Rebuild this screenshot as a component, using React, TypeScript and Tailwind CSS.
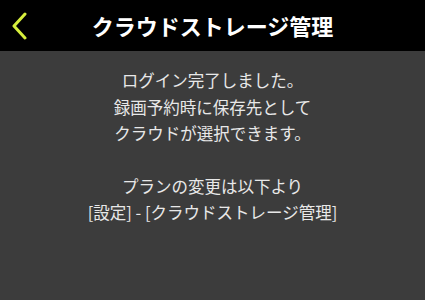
export default function App() {
  const font = { fontFamily: '"Noto Sans CJK JP", "Noto Sans", sans-serif' }
  return (
    <div className="w-[425px] h-[300px] bg-[#3c3c3c] flex flex-col" style={font}>
      <div className="h-[51px] bg-black flex items-center relative shrink-0">
        <button className="absolute left-[8px] top-[12px] w-[22px] h-[28px] flex items-center justify-center">
          <svg width="18" height="28" viewBox="0 0 18 28" fill="none">
            <path d="M15 2 L4 14 L15 26" stroke="#d6ee3c" strokeWidth="3" strokeLinecap="round" strokeLinejoin="round" />
          </svg>
        </button>
        <h1 className="flex-1 text-center text-white text-[22px] font-bold">クラウドストレージ管理</h1>
      </div>
      <div className="flex flex-col items-center text-[#e8e8e8] text-[16.5px] leading-[26.5px] pt-[16px]">
        <p>ログイン完了しました。</p>
        <p>録画予約時に保存先として</p>
        <p>クラウドが選択できます。</p>
        <p className="mt-[26px]">プランの変更は以下より</p>
        <p>[設定] - [クラウドストレージ管理]</p>
      </div>
    </div>
  )
}
